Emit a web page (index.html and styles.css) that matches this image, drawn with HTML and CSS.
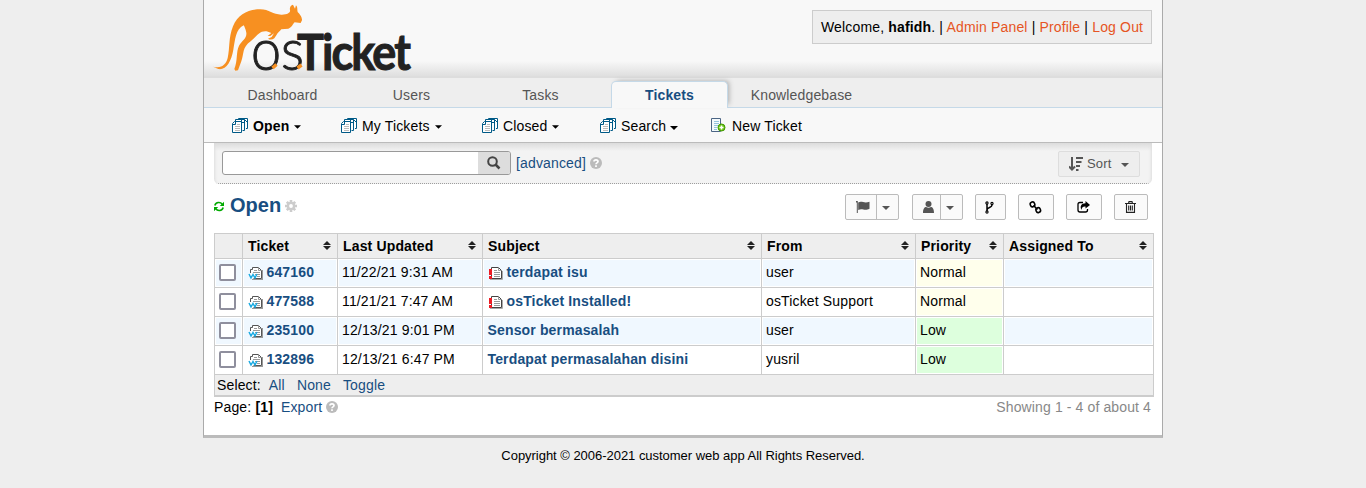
FILE: index.html
```
<!DOCTYPE html>
<html lang="en">
<head>
<meta charset="utf-8">
<title>osTicket</title>
<link rel="stylesheet" href="styles.css">
</head>
<body>
<svg width="0" height="0" class="defs">
  <symbol id="stack" viewBox="0 0 16 16"><g fill="#fff" stroke="#005a87"><path d="M6.500 1.500V.5h9v10h-1.500"/><path d="M3.500 3.500v-2h9v11h-2M12.500 1.500l3 3M9.500 1.500v3h3"/><path d="M.5 5.500l2-2h7v11h-9zM.5 6.500h3v-3"/></g><path d="M5 6.500h3M3 8.500h5M3 10.500h5M3 12.500h5" stroke="#bbb"/></symbol>
  <symbol id="newdoc" viewBox="0 0 16 16"><path d="M.5.500h9v13h-9z" fill="#f4f9fc" stroke="#4b6584"/><path d="M3 3.500h5M3 5.500h5M3 7.500h4M3 9.500h3M3 11.500h3" stroke="#94c4dd"/><circle cx="10.500" cy="9.500" r="3.500" fill="#6cc516" stroke="#3f9700"/><path d="M8.500 9.500h4M10.500 7.500v4" stroke="#fff" stroke-width="1.500"/></symbol>
  <symbol id="webdoc" viewBox="0 0 16 16"><path d="M4 14.500h11M14.500 5v10" stroke="#999"/><path d="M2.500 8V4.500h2v-2h6l3 3v8h-8" fill="#fff" stroke="#555"/><path d="M10.500 2.500v3h3M6 5.500h3M5 7.500h7M7 9.500h5M9 11.500h3" fill="none" stroke="#999"/><path d="M1 9l2 4 2-3.500L7 13l2-4" fill="none" stroke="#1cabe2" stroke-width="1.500"/></symbol>
  <symbol id="alertdoc" viewBox="0 0 16 16"><path d="M2 14.500h12.500V6" fill="none" stroke="#aaa"/><path d="M3.500 13.500V2.500h7l3 3v8z" fill="#fff" stroke="#444"/><path d="M10.500 2.500v3h3M6 5.500h3M6 7.500h6M6 9.500h6M6 11.500h6" fill="none" stroke="#999"/><path d="M1 4h3v6H1zM1 11h3v3H1z" fill="#ed1c24"/></symbol>
  <symbol id="sorter" viewBox="0 0 8 9"><path d="M4 0l4 4H0zM0 5h8L4 9z" fill="#222"/></symbol>
  <symbol id="help" viewBox="0 0 12 12"><circle cx="6" cy="6" r="6" fill="#bbb"/><path d="M4 4.600C4 2.400 8 2.400 8 4.600 8 6 6 5.800 6 7.300M6 8.300v1.700" fill="none" stroke="#fff" stroke-width="1.700"/></symbol>
  <symbol id="caret" viewBox="0 0 8 4"><path d="M0 0h8L4 4z" fill="currentColor"/></symbol>
</svg>
<div class="container">
  <header class="header">
    <svg class="logo" width="204" height="76" viewBox="0 0 204 76">
      <path transform="scale(.3333)" fill="#f79021" d="M9 200C35 207 48 193 53 174C60 144 55 114 69 79C84 42 116 28 151 28C178 28 190 45 216 44C233 43 242 37 240 30C238 22 243 15 249 14L255 26L258 16C264 22 261 29 263 36C269 41 277 52 276 61L272 69L254 67C247 73 247 82 235 86L214 88C209 95 203 98 200 104L193 115C187 120 180 120 174 116L185 111L192 100L181 108L173 108L184 99L170 94C148 91 139 111 122 124C96 142 102 163 94 184L84 211L76 212L73 207C83 184 78 155 87 137C96 121 111 115 109 98C107 87 103 79 101 76C77 86 75 122 70 149C64 185 48 211 25 207Z"/>
      <text class="logo-os" x="41" y="70" textLength="53" lengthAdjust="spacingAndGlyphs">os</text>
      <text class="logo-ticket" x="87" y="70" textLength="112" lengthAdjust="spacingAndGlyphs">Ticket</text>
      <path d="M62.500 68l4-3.500M87.500 68l4-3" stroke="#f79021" stroke-width="3.500"/>
    </svg>
    <div class="welcome">Welcome, <b>hafidh</b>. | <a>Admin Panel</a> | <a>Profile</a> | <a>Log Out</a></div>
  </header>
  <nav class="nav"><a>Dashboard</a><a>Users</a><a>Tasks</a><a class="active">Tickets</a><a class="last">Knowledgebase</a></nav>
  <nav class="subnav">
    <a><svg class="i16"><use href="#stack"/></svg><b>Open</b><svg class="caret"><use href="#caret"/></svg></a>
    <a><svg class="i16"><use href="#stack"/></svg><span>My Tickets</span><svg class="caret"><use href="#caret"/></svg></a>
    <a><svg class="i16"><use href="#stack"/></svg><span>Closed</span><svg class="caret"><use href="#caret"/></svg></a>
    <a><svg class="i16"><use href="#stack"/></svg><span>Search</span><svg class="caret low"><use href="#caret"/></svg></a>
    <a><svg class="i16"><use href="#newdoc"/></svg><span>New Ticket</span></a>
  </nav>
  <main class="content">
    <div class="searchbar">
      <div class="search"><div class="field"></div><div class="go"><svg width="14" height="14" viewBox="0 0 14 14" fill="none" stroke="#444" stroke-width="2"><circle cx="5.500" cy="5.500" r="4.300"/><path d="M8.500 8.500l4 4" stroke-width="2.500"/></svg></div></div>
      <a class="adv">[advanced]</a><svg class="help"><use href="#help"/></svg>
      <div class="sort"><svg width="15" height="14" viewBox="0 0 15 14" fill="none" stroke="#555" stroke-width="2"><path d="M3 0v12M0 9.500l3 3 3-3M7 1h7M7 5h5.500M7 9h4M7 13h2.500"/></svg><span>Sort</span><svg class="caret"><use href="#caret"/></svg></div>
    </div>
    <div class="titlebar">
      <svg width="10" height="11" viewBox="0 0 10 11" fill="none" stroke="#0a0" stroke-width="1.600"><path d="M.8 4.500C2 .8 6.500.8 8.200 3.200M9.200 6.500C8 10.200 3.500 10.200 1.800 7.800"/><path d="M10 .8V5H5.800zM0 10.200V6h4.200z" fill="#0a0" stroke="none"/></svg>
      <h2>Open</h2>
      <svg class="gear" width="12" height="12" viewBox="-6 -6 12 12"><g stroke="#ccc" stroke-width="2.600"><path d="M0-6V6M-6 0H6M-4.200-4.200L4.200 4.200M-4.200 4.200L4.200-4.200"/></g><circle r="4.300" fill="#ccc"/><circle r="1.900" fill="#fff"/></svg>
      <div class="actions">
        <div class="btn split w54"><span><svg width="14" height="12" viewBox="0 0 14 12" fill="#555"><path d="M0 0h1.800v12H.8V1.500H0zM2.200 1.500C6-.5 8 3 13.500.8v7C8 10.500 6.500 6.500 2.200 9z"/></svg></span><span><svg class="caret"><use href="#caret"/></svg></span></div>
        <div class="btn split w51"><span><svg width="11" height="12" viewBox="0 0 11 12" fill="#555"><circle cx="5.500" cy="3" r="3"/><path d="M0 12C0 7 2 6 3 6c2 1 3 1 5 0 1 0 3 1 3 6z"/></svg></span><span><svg class="caret"><use href="#caret"/></svg></span></div>
        <div class="btn w31"><svg width="9" height="13" viewBox="0 0 9 13" fill="none" stroke="#000" stroke-width="1.100"><circle cx="2" cy="2" r="1.100"/><circle cx="7" cy="2.500" r="1.100"/><circle cx="2" cy="11" r="1.100"/><path d="M2 3v7M7 4c0 3-5 2-5 5" stroke-width="1.500"/></svg></div>
        <div class="btn w36"><svg width="13" height="13" viewBox="0 0 13 13" fill="none" stroke="#000" stroke-width="1.600"><rect x="1.300" y="1" width="4.400" height="4.800" rx="2" transform="rotate(-20 3.500 3.400)"/><rect x="7" y="6.700" width="4.400" height="4.800" rx="2" transform="rotate(-20 9.200 9)"/><path d="M4.500 4.500l4 4"/></svg></div>
        <div class="btn w36"><svg width="13" height="12" viewBox="0 0 13 12"><path d="M6 1.500H3C1.500 1.500 1 2 1 3.500V9c0 1.500.5 2 2 2h5.500c1.500 0 2-.5 2-2V8" fill="none" stroke="#000" stroke-width="1.300"/><path d="M8.500 0L13 4 8.500 7.500V5.500C6 5.500 5 6 4.500 9 2.500 5 4.500 2.200 8.500 2.200z"/></svg></div>
        <div class="btn w34"><svg width="11" height="12" viewBox="0 0 11 12" fill="none" stroke="#222" stroke-width="1.100"><path d="M0 2.500h11M3.500 2.500L4 .6h3l.5 1.900M1.500 3v8.400h8V3M3.700 4.500v5M5.500 4.500v5M7.300 4.500v5"/></svg></div>
      </div>
    </div>
    <div class="table">
      <div class="row head"><div></div><div>Ticket<svg><use href="#sorter"/></svg></div><div>Last Updated<svg><use href="#sorter"/></svg></div><div>Subject<svg><use href="#sorter"/></svg></div><div>From<svg><use href="#sorter"/></svg></div><div>Priority<svg><use href="#sorter"/></svg></div><div>Assigned To<svg><use href="#sorter"/></svg></div></div>
      <div class="row odd"><div><i class="check"></i></div><div><svg class="i16"><use href="#webdoc"/></svg><a>647160</a></div><div>11/22/21 9:31 AM</div><div><svg class="i16"><use href="#alertdoc"/></svg><a>terdapat isu</a></div><div>user</div><div class="normal">Normal</div><div></div></div>
      <div class="row"><div><i class="check"></i></div><div><svg class="i16"><use href="#webdoc"/></svg><a>477588</a></div><div>11/21/21 7:47 AM</div><div><svg class="i16"><use href="#alertdoc"/></svg><a>osTicket Installed!</a></div><div>osTicket Support</div><div class="normal">Normal</div><div></div></div>
      <div class="row odd"><div><i class="check"></i></div><div><svg class="i16"><use href="#webdoc"/></svg><a>235100</a></div><div>12/13/21 9:01 PM</div><div><a>Sensor bermasalah</a></div><div>user</div><div class="low-p">Low</div><div></div></div>
      <div class="row"><div><i class="check"></i></div><div><svg class="i16"><use href="#webdoc"/></svg><a>132896</a></div><div>12/13/21 6:47 PM</div><div><a>Terdapat permasalahan disini</a></div><div>yusril</div><div class="low-p">Low</div><div></div></div>
      <div class="select"><span>Select:</span><a>All</a><a>None</a><a>Toggle</a></div>
    </div>
    <div class="pager"><span>Page: <b>[1]</b></span><a>Export</a><svg class="help"><use href="#help"/></svg><span class="showing">Showing 1 - 4 of about 4</span></div>
  </main>
</div>
<footer class="footer">Copyright © 2006-2021 customer web app All Rights Reserved.</footer>
</body>
</html>
```
FILE: styles.css
```
* { box-sizing: border-box; }
body { margin: 0; background: #eee; color: #000; font: 14px/16px "Liberation Sans", Arial, sans-serif; letter-spacing: .15px; }
.defs { display: block; }
svg { flex: none; }
a { color: #184e81; }
.container { width: 960px; height: 438px; margin: 0 auto; background: #fff; border: 1px solid #aaa; border-top: 0; border-bottom: 3px solid #bbb; }
.header { height: 76px; display: flex; justify-content: space-between; align-items: flex-start; padding: 0 10px 0 6px; background: linear-gradient(#f8f8f8 80%, #dfdfdf); }
.logo { display: block; overflow: visible; letter-spacing: 0; }
.logo-os { font: 300 57px Lato, sans-serif; fill: #222; stroke: #222; stroke-width: .9; }
.logo-ticket { font: 700 49px Lato, sans-serif; letter-spacing: -2px; fill: #222; stroke: #222; stroke-width: 1; }
.welcome { width: 340px; height: 34px; margin-top: 10px; border: 1px solid #ccc; background: #eee; padding: 8px 0 0 8px; white-space: nowrap; letter-spacing: .16px; }
.welcome a { color: #e65524; }
.nav { height: 32px; display: flex; align-items: flex-end; padding-left: 20px; border-top: 2px solid #ddd; border-bottom: 1px solid #c5d9e8; background: #eee; }
.nav a { width: 117px; height: 26px; margin-right: 12px; padding-top: 6px; text-align: center; color: #555; }
.nav a.active { height: 27px; margin-bottom: -1px; padding-top: 5px; border: 1px solid #c5d9e8; border-bottom: 0; border-radius: 5px 5px 0 0; background: #f8f8f8; color: #184e81; font-weight: bold; box-shadow: 3px -2px 5px -2px #aaa; }
.nav a.last { width: 123px; }
.subnav { height: 35px; display: grid; grid-template-columns: 109px 141px 118px 111px 1fr; padding: 1px 0 0 28px; background: #f8f8f8; border-bottom: 1px solid #bbb; }
.subnav a { display: flex; align-items: center; color: #000; }
.i16 { width: 16px; height: 16px; margin-right: 5px; }
.caret { width: 8px; height: 4px; margin-left: 5px; margin-top: 2px; }
.subnav .caret { width: 7px; }
.subnav .low { width: 8px; margin-left: 4px; margin-top: 5px; }
.content { padding: 0 10px; }
.searchbar { width: 938px; height: 41px; display: flex; align-items: flex-start; background: repeating-linear-gradient(90deg, #999 0 1px, #f3f3f3 1px 2px) bottom / 100% 1px no-repeat, linear-gradient(#dcdcdc, #f3f3f3 8px); border-radius: 0 0 5px 5px; padding: 8px 12px 0 8px; box-shadow: inset 3px 0 3px -2px #ddd, inset -3px 0 3px -2px #ddd; }
.search { width: 289px; height: 24px; display: flex; border: 1px solid #999; border-radius: 3px; overflow: hidden; background: #fff; }
.field { width: 255px; }
.go { width: 32px; background: #ddd; display: flex; align-items: center; justify-content: center; }
.adv { margin: 4px 4px 0 5px; }
.help { width: 12px; height: 12px; margin-top: 6px; }
.sort { width: 82px; height: 26px; margin-left: auto; display: flex; align-items: center; padding-left: 10px; color: #555; background: #eee; border: 1px solid #ddd; border-radius: 2px; font-size: 13px; }
.sort span { margin-left: 3px; }
.sort .caret { margin-left: 10px; }
.titlebar { height: 49px; display: flex; align-items: flex-start; padding-right: 4px; }
.titlebar > svg:first-child { margin-top: 17px; }
h2 { font-size: 20px; line-height: 24px; margin: 9px 4px 0 6px; color: #184e81; letter-spacing: 0; }
.titlebar .gear { margin-top: 16px; }
.actions { margin: 10px 0 0 auto; display: grid; grid-template-columns: 67px 63px 43px 48px 48px 34px; }
.btn { height: 26px; display: flex; align-items: center; justify-content: center; border: 1px solid #bbb; border-radius: 2px; background: #fafafa; color: #555; padding-right: 2px; }
.btn .caret { margin: 2px 4px 0 0; }
.btn.split { padding-right: 0; }
.split span { display: flex; align-items: center; justify-content: center; height: 24px; flex: 1; }
.split span:first-child { flex: 0 0 31px; padding-left: 4px; border-right: 1px solid #bbb; }
.w54 { width: 54px; } .w51 { width: 51px; } .w31 { width: 31px; } .w36 { width: 36px; } .w34 { width: 34px; }
.split.w51 span:first-child { flex-basis: 28px; }
.table { width: 940px; border: 1px solid #ccc; border-bottom-width: 2px; }
.row { height: 29px; display: grid; grid-template-columns: 28px 95px 145px 279px 154px 88px 149px; border-bottom: 1px solid #ccc; }
.row > div { display: flex; align-items: center; border-right: 1px solid #ccc; padding: 0 4px 2px; white-space: nowrap; box-shadow: inset 0 0 0 1px #fff; }
.row > div:last-child { border-right: 0; }
.odd > div { background: #f0f8ff; }
.row > div.normal { background: #ffffec; }
.row > div.low-p { background: #dfd; }
.row a { font-weight: bold; margin-left: .5px; }
.row .i16 { margin: 1px 2px 0 1px; }
.head { height: 25px; background: #eee; font-weight: bold; }
.row.head > div { box-shadow: none; padding: 0 6px 1px 5px; }
.head svg { width: 8px; height: 9px; margin-left: auto; }
.check { width: 17px; height: 17px; margin-top: 1px; border: 2px solid #8f8f9d; border-radius: 2px; background: #fff; }
.select { height: 20px; display: flex; gap: 12px; background: #eee; padding: 2px 0 0 2px; }
.select span { margin-right: -4px; }
.pager { display: flex; padding: 2px 1px 0 0; }
.pager a { margin-left: 8px; }
.pager .help { margin: 2px 0 0 4px; }
.showing { margin-left: auto; color: #888; letter-spacing: .12px; }
.footer { text-align: center; font-size: 13px; padding-top: 10px; letter-spacing: -.03px; }
```
